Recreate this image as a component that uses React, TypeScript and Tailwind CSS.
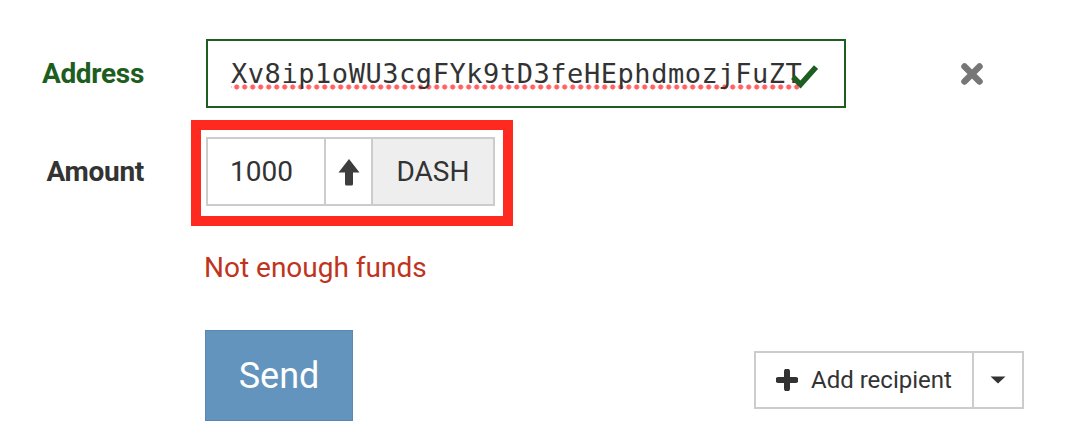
import React from "react";

export default function App() {
  return (
    <div className="relative w-[1080px] h-[446px] bg-white pt-[39px] font-['Roboto',sans-serif] text-[#333]">
      {/* Address row */}
      <div className="flex items-center h-[69px]">
        <div className="w-[144px] text-right font-bold text-[28px] leading-none text-[#1d5e1f] tracking-[-0.3px]">Address</div>
        <div className="relative ml-[62px] w-[640px] h-full border-2 border-[#1e5e20] flex items-center pl-[23px] overflow-hidden">
          <span className="inline-block whitespace-nowrap font-['DejaVu_Sans_Mono',monospace] text-[27px] tracking-[0.55px] leading-[32px] text-[#333] bg-[radial-gradient(circle,#ff6161_2.2px,transparent_2.9px)] bg-[length:8px_6px] bg-repeat-x bg-bottom">
            Xv8ip1oWU3cgFYk9tD3feHEphdmozjFuZT
          </span>
          <svg className="absolute left-[580px] top-[22px]" width="30" height="26" viewBox="0 0 30 26">
            <path d="M5 14 L12.5 21.5 L28 4" fill="none" stroke="#1e5e20" strokeWidth="5.5" strokeLinejoin="miter" />
          </svg>
        </div>
        <svg className="ml-[114px]" width="24" height="24" viewBox="0 0 24 24">
          <path d="M4.5 4.5 L19.5 19.5 M19.5 4.5 L4.5 19.5" fill="none" stroke="#777" strokeWidth="6.5" strokeLinecap="round" />
        </svg>
      </div>

      {/* Amount row */}
      <div className="flex items-center h-[69px] mt-[29px]">
        <div className="w-[144px] text-right font-bold text-[28px] leading-none text-[#333] tracking-[-0.3px]">Amount</div>
        <div className="ml-[62px] h-full flex border-2 border-[#ccc]">
          <div className="w-[116px] flex items-center pl-[22px] text-[28px] text-[#333] bg-white">1000</div>
          <div className="w-[47px] border-l-2 border-[#ccc] flex items-center justify-center bg-white">
            <svg width="22" height="28" viewBox="0 0 22 28">
              <path d="M11 1 L21.5 14.5 L15 14.5 L15 26 Q15 27.5 13.5 27.5 L8.5 27.5 Q7 27.5 7 26 L7 14.5 L0.5 14.5 Z" fill="#3d3d3d" />
            </svg>
          </div>
          <div className="w-[122px] border-l-2 border-[#ccc] bg-[#eee] flex items-center justify-center text-[28px] text-[#333]">DASH</div>
        </div>
      </div>

      {/* Annotation box */}
      <div className="absolute left-[191px] top-[120px] w-[322px] h-[106px] border-[10px] border-[#ff2a1f] pointer-events-none" />

      {/* Error */}
      <div className="mt-[42px] ml-[204px] text-[28px] leading-[40px] text-[#c0341d]">Not enough funds</div>

      {/* Buttons */}
      <div className="flex items-start mt-[42px]">
        <button className="ml-[205px] w-[148px] h-[91px] bg-[#6394be] border border-[#5a88b2] text-white text-[36px] flex items-center justify-center">Send</button>
        <div className="ml-[401px] mt-[21px] h-[58px] flex border-2 border-[#ccc]">
          <div className="flex items-center pl-[20px] pr-[20px] text-[24px] text-[#333]">
            <svg width="22" height="22" viewBox="0 0 22 22" className="mr-[13px]">
              <path d="M11 2.5 L11 19.5 M2.5 11 L19.5 11" fill="none" stroke="#333" strokeWidth="6" strokeLinecap="round" />
            </svg>
            Add recipient
          </div>
          <div className="w-[50px] border-l-2 border-[#ccc] flex items-center justify-center">
            <svg width="16" height="8" viewBox="0 0 16 8">
              <path d="M0.5 0.5 L15.5 0.5 L8 7.5 Z" fill="#333" />
            </svg>
          </div>
        </div>
      </div>
    </div>
  );
}
